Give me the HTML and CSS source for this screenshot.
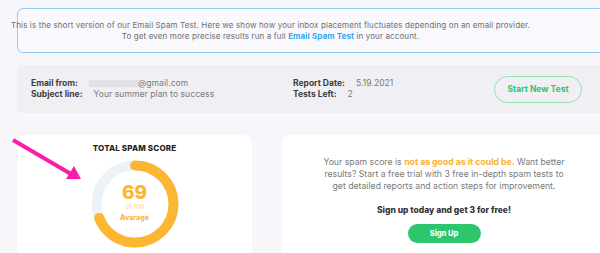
FILE: index.html
```html
<!DOCTYPE html>
<html>
<head>
<meta charset="utf-8">
<link rel="stylesheet" href="styles.css">
</head>
<body>
<div class="page">
  <div class="notice">
    <div class="notice-inner">
      <p>This is the short version of our Email Spam Test. Here we show how your inbox placement fluctuates depending on an email provider.<br>To get even more precise results run a full <a class="link">Email Spam Test</a> in your account.</p>
    </div>
  </div>

  <div class="info">
    <div class="group g1">
      <div class="row"><span class="lbl">Email from:</span><span class="val"><span class="blur"></span>@gmail.com</span></div>
      <div class="row"><span class="lbl">Subject line:</span><span class="val">Your summer plan to success</span></div>
    </div>
    <div class="group g2">
      <div class="row"><span class="lbl">Report Date:</span><span class="val">5.19.2021</span></div>
      <div class="row"><span class="lbl">Tests Left:</span><span class="val">2</span></div>
    </div>
    <button class="btn-outline">Start New Test</button>
  </div>

  <div class="cards">
    <div class="card score">
      <div class="title">TOTAL SPAM SCORE</div>
      <div class="gauge">
        <svg class="ring" width="88" height="88" viewBox="0 0 88 88">
          <circle cx="44" cy="44" r="38.5" fill="none" stroke="#edf2f9" stroke-width="10"/>
          <circle cx="44" cy="44" r="38.5" fill="none" stroke="#fdb632" stroke-width="10" stroke-linecap="round" stroke-dasharray="166.9 241.9" transform="rotate(-90 44 44)"/>
        </svg>
        <div class="gauge-text">
          <div class="num">69</div>
          <div class="of">of 100</div>
          <div class="grade">Avarage</div>
        </div>
      </div>
    </div>
    <div class="card promo">
      <p class="msg">Your spam score is <b class="warn">not as good as it could be.</b> Want better<br>results? Start a free trial with 3 free in-depth spam tests to<br>get detailed reports and action steps for improvement.</p>
      <p class="cta">Sign up today and get 3 for free!</p>
      <button class="btn-green">Sign Up</button>
    </div>
  </div>

  <svg class="arrow" width="90" height="60" viewBox="0 0 90 60">
    <line x1="13" y1="10" x2="71" y2="44" stroke="#fb1ca9" stroke-width="4"/>
    <polygon points="81,49 66,49 74,36" fill="#fb1ca9"/>
  </svg>
</div>
</body>
</html>
```
FILE: styles.css
```css
html, body {
  margin: 0;
  padding: 0;
  overflow: hidden;
  background: #f7f7fb;
}
body {
  font-family: Inter, "Open Sans", sans-serif;
  color: #6e6e6e;
}
.page {
  position: relative;
  width: 640px;
  padding: 8px 0 0 17px;
}
.notice {
  height: 45px;
  box-sizing: border-box;
  border: 1.5px solid #8ecdf7;
  border-radius: 6px;
  background: #f8f8fd;
  display: flex;
  align-items: center;
}
.notice-inner {
  width: 505px;
  display: flex;
  justify-content: center;
}
.notice p {
  margin: 0;
  white-space: nowrap;
  text-align: center;
  font-size: 8px;
  line-height: 11px;
  letter-spacing: 0.12px;
  color: #707070;
}
.link {
  color: #35a6f2;
  font-weight: 700;
}
.info {
  margin-top: 12px;
  height: 48px;
  background: #efeff4;
  border-radius: 6px;
  display: flex;
  align-items: center;
  padding-left: 14px;
}
.group {
  display: flex;
  flex-direction: column;
}
.g1 { width: 262px; }
.g2 { width: 201px; }
.row {
  display: flex;
  align-items: center;
  height: 11px;
  font-size: 8.5px;
  line-height: 11px;
}
.lbl {
  font-weight: 700;
  color: #3d3d3d;
  margin-right: 11px;
}
.val {
  color: #7a7a7a;
  display: flex;
  align-items: center;
  letter-spacing: 0.08px;
}
.blur {
  display: inline-block;
  width: 49px;
  height: 7px;
  background: #e2e2e6;
}
.btn-outline {
  width: 88px;
  height: 27px;
  border: 1px solid #93e1b4;
  border-radius: 14px;
  background: transparent;
  color: #2ec56c;
  font-family: inherit;
  font-weight: 700;
  font-size: 8.5px;
  padding: 0;
}
.cards {
  margin-top: 22px;
  display: flex;
  gap: 30px;
}
.card {
  background: #ffffff;
  border-radius: 8px;
  height: 130px;
}
.score {
  width: 235px;
  padding-top: 7px;
  display: flex;
  flex-direction: column;
  align-items: center;
}
.title {
  font-size: 8px;
  line-height: 12px;
  font-weight: 800;
  color: #1f1f1f;
  letter-spacing: 0.15px;
}
.gauge {
  margin-top: 6px;
  display: grid;
  width: 88px;
  height: 88px;
}
.ring, .gauge-text {
  grid-area: 1 / 1;
}
.gauge-text {
  display: flex;
  flex-direction: column;
  align-items: center;
  justify-content: center;
  color: #fdb632;
}
.num {
  font-size: 19px;
  line-height: 20px;
  font-weight: 800;
  margin-top: -3px;
}
.of {
  font-size: 6.5px;
  line-height: 9px;
  color: #fcd489;
}
.grade {
  font-size: 7px;
  line-height: 11px;
  font-weight: 800;
}
.promo {
  width: 324px;
  display: flex;
  flex-direction: column;
  align-items: center;
  padding-top: 21px;
}
.msg {
  margin: 0;
  text-align: center;
  font-size: 8.7px;
  line-height: 12px;
  color: #7a7a7a;
}
.warn {
  color: #fbb030;
  font-weight: 700;
}
.cta {
  margin: 12px 0 0;
  font-size: 8.5px;
  line-height: 12px;
  font-weight: 800;
  color: #333333;
}
.btn-green {
  margin-top: 8px;
  width: 73px;
  height: 19px;
  border: none;
  border-radius: 10px;
  background: #2dc66c;
  color: #ffffff;
  font-family: inherit;
  font-weight: 800;
  font-size: 7.5px;
  padding: 0;
}
.arrow {
  position: absolute;
  left: 0;
  top: 130px;
}
```
